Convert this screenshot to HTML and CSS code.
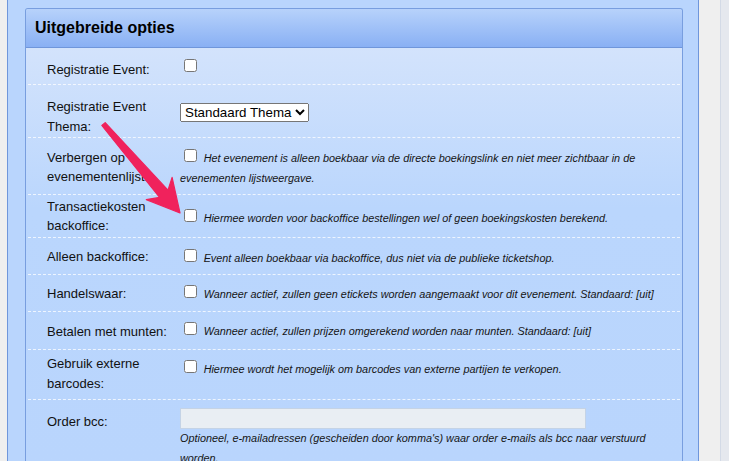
FILE: index.html
```html
<!DOCTYPE html>
<html lang="nl">
<head>
<meta charset="utf-8">
<title>Uitgebreide opties</title>
<link rel="stylesheet" href="styles.css">
</head>
<body>
<div class="page">
  <div class="gutter"></div>
  <div class="outer">
    <section class="panel">
      <h2 class="panel-head">Uitgebreide opties</h2>
      <div class="panel-body">
        <div class="row r1">
          <div class="lab">Registratie Event:</div>
          <div class="ctl"><input type="checkbox" class="cb"></div>
        </div>
        <div class="row r2">
          <div class="lab">Registratie Event Thema:</div>
          <div class="ctl"><select class="sel"><option>Standaard Thema</option></select></div>
        </div>
        <div class="row r3">
          <div class="lab">Verbergen op evenementenlijst:</div>
          <div class="ctl"><input type="checkbox" class="cb"> <span class="desc">Het evenement is alleen boekbaar via de directe boekingslink en niet meer zichtbaar in de evenementen lijstweergave.</span></div>
        </div>
        <div class="row r4">
          <div class="lab">Transactiekosten backoffice:</div>
          <div class="ctl"><input type="checkbox" class="cb"> <span class="desc">Hiermee worden voor backoffice bestellingen wel of geen boekingskosten berekend.</span></div>
        </div>
        <div class="row r5">
          <div class="lab">Alleen backoffice:</div>
          <div class="ctl"><input type="checkbox" class="cb"> <span class="desc">Event alleen boekbaar via backoffice, dus niet via de publieke ticketshop.</span></div>
        </div>
        <div class="row r6">
          <div class="lab">Handelswaar:</div>
          <div class="ctl"><input type="checkbox" class="cb"> <span class="desc">Wanneer actief, zullen geen etickets worden aangemaakt voor dit evenement. Standaard: [uit]</span></div>
        </div>
        <div class="row r7">
          <div class="lab">Betalen met munten:</div>
          <div class="ctl"><input type="checkbox" class="cb"> <span class="desc">Wanneer actief, zullen prijzen omgerekend worden naar munten. Standaard: [uit]</span></div>
        </div>
        <div class="row r8">
          <div class="lab">Gebruik externe barcodes:</div>
          <div class="ctl"><input type="checkbox" class="cb"> <span class="desc">Hiermee wordt het mogelijk om barcodes van externe partijen te verkopen.</span></div>
        </div>
        <div class="row r9">
          <div class="lab">Order bcc:</div>
          <div class="ctl">
            <input type="text" class="txt">
            <div class="desc desc-block">Optioneel, e-mailadressen (gescheiden door komma's) waar order e-mails als bcc naar verstuurd worden.</div>
          </div>
        </div>
      </div>
    </section>
  </div>
  <div class="side"></div>
  <div class="scroll"></div>
</div>
<svg class="arrow" width="729" height="461" viewBox="0 0 729 461" aria-hidden="true">
  <path d="M101.8 125.4 L159.6 197.4 L146.3 199.6 L180 213 L172.1 177.4 L168 190.2 L105.2 122.6 Z" fill="#f0225c" stroke="#f0225c" stroke-width="1.2" stroke-linejoin="round"/>
</svg>
</body>
</html>
```

FILE: styles.css
```css
html, body {
  margin: 0;
  padding: 0;
}

body {
  width: 729px;
  height: 461px;
  overflow: hidden;
  position: relative;
  background: #efefef;
  font-family: "Liberation Sans", Arial, sans-serif;
  color: #111;
}

.page {
  display: flex;
  height: 461px;
}

.gutter {
  flex: none;
  width: 7px;
}

.outer {
  flex: none;
  width: 692px;
  box-sizing: border-box;
  border-left: 1px solid #6f96db;
  border-right: 1px solid #6f96db;
  background: #b9d5fd;
  padding: 8px 15px 0 17px;
}

.side {
  flex: none;
  width: 21px;
}

.scroll {
  flex: none;
  width: 9px;
  box-sizing: border-box;
  border-left: 1px solid #d3dae6;
  background: #e5e8ee;
}

.panel {
  width: 658px;
  box-sizing: border-box;
  border: 1px solid #789edf;
  border-bottom: none;
  border-radius: 3px 3px 0 0;
  height: 460px;
  overflow: hidden;
}

.panel-head {
  margin: 0;
  height: 38px;
  line-height: 37px;
  padding-left: 9px;
  font-size: 16px;
  font-weight: bold;
  color: #000;
  background: linear-gradient(#b7d2fb, #89b0f4);
  border-bottom: 1px solid #6f96db;
}

.panel-body {
  padding: 0 2px;
  height: 420px;
  background: linear-gradient(#d3e3fc 0, #bad6fd 160px, #b9d5fd 100%);
}

.row {
  display: flex;
  align-items: flex-start;
  border-bottom: 1px dashed rgba(255, 255, 255, 0.75);
}

.lab {
  flex: none;
  width: 152px;
  box-sizing: border-box;
  padding-left: 19px;
  padding-top: 9.5px;
  font-size: 13px;
  line-height: 19.5px;
  color: #111;
}

.ctl {
  flex: 1;
  min-width: 0;
  padding-top: 9.5px;
  padding-right: 14px;
  font-size: 13px;
  line-height: 19.5px;
}

.cb {
  width: 13px;
  height: 13px;
  margin: 0 3px 0 4px;
  vertical-align: baseline;
}

.desc {
  font-size: 10.85px;
  font-style: italic;
  color: #151515;
}

.desc-block {
  display: block;
  line-height: 19.5px;
}

.sel {
  display: block;
  font-family: "Liberation Sans", Arial, sans-serif;
  font-size: 13.33px;
  color: #000;
}

.txt {
  display: block;
  width: 406px;
  height: 21px;
  box-sizing: border-box;
  margin: 0;
  border: 1px solid #c4d3e6;
  background: #e9eef3;
}

.r1 { height: 36px; }
.r1 .lab { padding-top: 12px; }
.r1 .ctl { padding-top: 10px; }

.r2 { height: 52px; }
.r2 .lab { padding-top: 12px; }
.r2 .ctl { padding-top: 18px; }

.r3 { height: 56px; }

.r4 { height: 42px; }
.r4 .lab { padding-top: 1.5px; }
.r4 .ctl { padding-top: 12.5px; }

.r5 { height: 36px; }
.r5 .lab { padding-top: 9px; }

.r6 { height: 36px; }
.r6 .lab { padding-top: 9px; }
.r6 .ctl { padding-top: 9px; }

.r7 { height: 37px; }
.r7 .ctl { padding-top: 9px; }

.r8 { height: 49px; }
.r8 .lab { padding-top: 4px; }
.r8 .ctl { padding-top: 9px; }

.r9 { border-bottom: none; }
.r9 .lab { padding-top: 11.5px; }
.r9 .ctl { padding-top: 8px; }

.arrow {
  position: absolute;
  left: 0;
  top: 0;
  pointer-events: none;
}
```
